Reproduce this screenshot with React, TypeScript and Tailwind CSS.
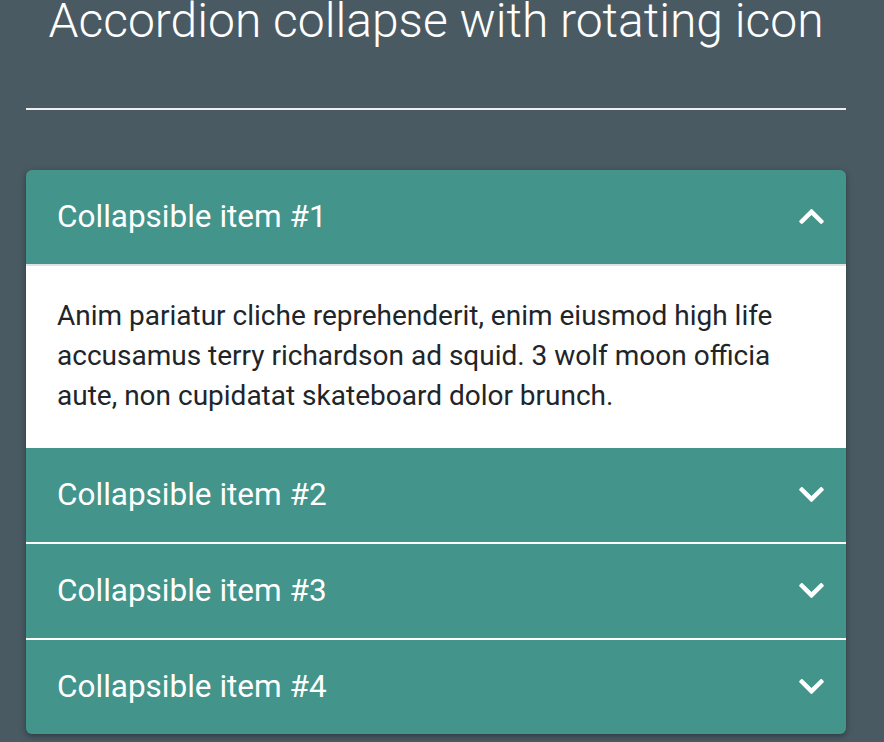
import { useState } from "react";

const items = [
  {
    id: 1,
    title: "Collapsible item #1",
    body: "Anim pariatur cliche reprehenderit, enim eiusmod high life accusamus terry richardson ad squid. 3 wolf moon officia aute, non cupidatat skateboard dolor brunch.",
  },
  { id: 2, title: "Collapsible item #2", body: "Anim pariatur cliche reprehenderit, enim eiusmod high life accusamus terry richardson ad squid." },
  { id: 3, title: "Collapsible item #3", body: "Anim pariatur cliche reprehenderit, enim eiusmod high life accusamus terry richardson ad squid." },
  { id: 4, title: "Collapsible item #4", body: "Anim pariatur cliche reprehenderit, enim eiusmod high life accusamus terry richardson ad squid." },
];

function Chevron({ open }: { open: boolean }) {
  return (
    <svg
      viewBox="5 123 438 266"
      className={`w-[25px] h-[15px] transition-transform duration-300 ${open ? "rotate-180" : ""}`}
      fill="white"
    >
      <path d="M207.029 381.476L12.686 187.132c-9.373-9.373-9.373-24.569 0-33.941l22.667-22.667c9.357-9.357 24.522-9.375 33.901-.04L224 284.505l154.745-154.021c9.379-9.335 24.544-9.317 33.901.04l22.667 22.667c9.373 9.373 9.373 24.569 0 33.941L240.971 381.476c-9.373 9.372-24.569 9.372-33.942 0z" />
    </svg>
  );
}

export default function App() {
  const [open, setOpen] = useState<number | null>(1);

  return (
    <div className="min-h-[742px] bg-[#4a5a63] overflow-hidden font-['Roboto',sans-serif]">
      <div className="ml-[26px] w-[820px]">
        <h1 className="-mt-[8px] text-center text-[48px] leading-[1.2] font-light text-white">
          Accordion collapse with rotating icon
        </h1>
        <hr className="mt-[58px] border-0 h-[2px] bg-[#eeeeee]" />

        <div className="mt-[60px] rounded-[6px] overflow-hidden shadow-[0_2px_5px_rgba(0,0,0,0.26),0_2px_10px_rgba(0,0,0,0.12)]">
          {items.map((item, i) => {
            const isOpen = open === item.id;
            const next = items[i + 1];
            const lineBelow = !isOpen && next && open !== next.id;
            return (
              <div key={item.id}>
                <button
                  onClick={() => setOpen(isOpen ? null : item.id)}
                  className={`box-content w-[767px] h-[94px] flex items-center justify-between pl-[31px] pr-[22px] bg-[#43948a] text-white text-[31.5px] leading-[1.2] text-left ${
                    isOpen ? "border-b-2 border-[#dee2e6]" : lineBelow ? "border-b-2 border-white" : ""
                  }`}
                >
                  <span>{item.title}</span>
                  <Chevron open={isOpen} />
                </button>
                {isOpen && (
                  <div className="bg-white px-[31px] pt-[30px] pb-[32px] text-[28px] leading-[40px] text-[#212529]">
                    {item.body}
                  </div>
                )}
              </div>
            );
          })}
        </div>
      </div>
    </div>
  );
}
